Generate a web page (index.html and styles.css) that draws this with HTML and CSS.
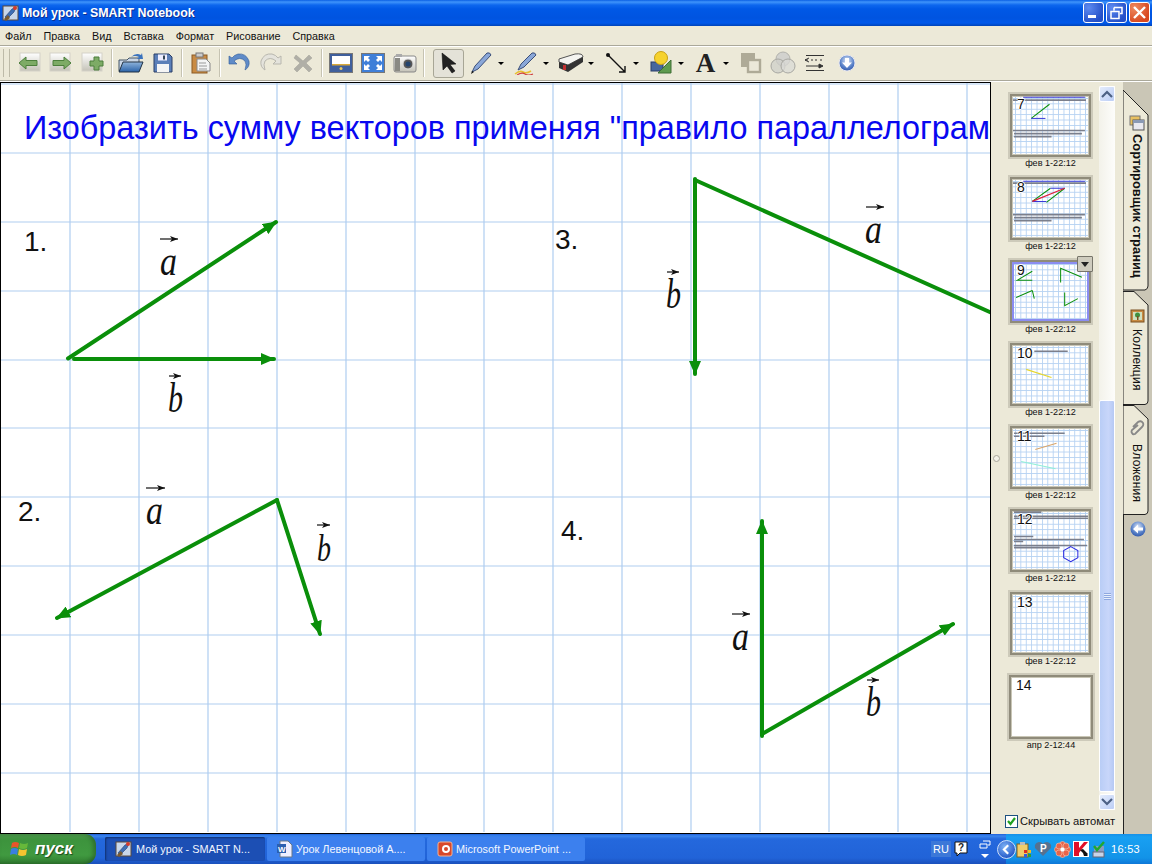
FILE: index.html
```html
<!DOCTYPE html>
<html lang="ru">
<head>
<meta charset="utf-8">
<title>Мой урок - SMART Notebook</title>
<link rel="stylesheet" href="styles.css">
</head>
<body>
<svg class="defs" width="0" height="0" aria-hidden="true">
  <defs>
    <linearGradient id="gBtn" x1="0" y1="0" x2="0" y2="1"><stop offset="0" stop-color="#fff"/><stop offset="1" stop-color="#c4c2b7"/></linearGradient>
    <linearGradient id="gBlue" x1="0" y1="0" x2="0" y2="1"><stop offset="0" stop-color="#8fb4dc"/><stop offset="1" stop-color="#2a62a8"/></linearGradient>
    <radialGradient id="gCircle" cx=".5" cy=".35" r=".7"><stop offset="0" stop-color="#dfeafa"/><stop offset=".6" stop-color="#5b83c9"/><stop offset="1" stop-color="#2b53a8"/></radialGradient>
    <marker id="head" viewBox="0 0 14 12" refX="13" refY="6" markerWidth="14" markerHeight="12" markerUnits="userSpaceOnUse" orient="auto"><path d="M0 0L14 6L0 12Z" fill="#0a8f0a"/></marker>
    <marker id="thin" viewBox="0 0 8 6" refX="8" refY="3" markerWidth="8" markerHeight="6" markerUnits="userSpaceOnUse" orient="auto"><path d="M0 0L8 3L0 6L2 3Z" fill="#111"/></marker>
    <symbol id="appicon" viewBox="0 0 18 18">
      <rect x="1" y="2" width="15" height="14" fill="#c9d7ea" stroke="#5c4a3a"/>
      <path d="M3 13L10 5L14 3L12 8L5 15Z" fill="#3f6fb5" stroke="#1c3a70" stroke-width=".6"/>
      <path d="M2 15L6 11L8 14L4 17Z" fill="#7a5a30"/>
      <circle cx="13" cy="4" r="2" fill="#d63a2a"/>
    </symbol>
  </defs>
</svg>

<header class="titlebar">
  <svg class="title-icon" width="18" height="18"><use href="#appicon"/></svg>
  <span class="title-text">Мой урок - SMART Notebook</span>
  <div class="win-btns">
    <div class="win-btn"><svg width="21" height="21" viewBox="0 0 21 21"><rect x="5" y="13" width="8" height="3" fill="#fff"/></svg></div>
    <div class="win-btn"><svg width="21" height="21" viewBox="0 0 21 21"><path d="M8 5.5h8v6h-2M5 9.5h8v7H5z M8 5.5v3" fill="none" stroke="#fff" stroke-width="1.5"/></svg></div>
    <div class="win-btn close"><svg width="21" height="21" viewBox="0 0 21 21"><path d="M5 5L16 16M16 5L5 16" stroke="#fff" stroke-width="2.4"/></svg></div>
  </div>
</header>

<nav class="menubar">
  <span>Файл</span><span>Правка</span><span>Вид</span><span>Вставка</span><span>Формат</span><span>Рисование</span><span>Справка</span>
</nav>

<div class="toolbar">
  <i class="grip"></i><i class="grip second"></i>
  <div class="btn"><svg width="24" height="22" viewBox="0 0 24 22"><rect x="3" y="1" width="20" height="18" fill="url(#gBtn)" stroke="#d4d2c8"/><path d="M2 11L9 5v3.5h11v5H9V17Z" fill="#7dab66" stroke="#4c7f3c"/></svg></div>
  <div class="btn"><svg width="24" height="22" viewBox="0 0 24 22"><rect x="1" y="1" width="20" height="18" fill="url(#gBtn)" stroke="#d4d2c8"/><path d="M22 11L15 5v3.5H4v5h11V17Z" fill="#7dab66" stroke="#4c7f3c"/></svg></div>
  <div class="btn"><svg width="24" height="22" viewBox="0 0 24 22"><rect x="1" y="1" width="20" height="18" fill="url(#gBtn)" stroke="#d4d2c8"/><path d="M13 5h5v4h4v5h-4v4h-5v-4H9V9h4Z" fill="#7dab66" stroke="#4c7f3c"/></svg></div>
  <i class="sep"></i>
  <div class="btn"><svg width="26" height="22" viewBox="0 0 26 22"><path d="M1 8h8l2-2h10v13H1Z" fill="#c9d6e6" stroke="#456"/><path d="M1 20L5 10h20l-4 10Z" fill="url(#gBlue)" stroke="#234"/><path d="M13 5Q18 0 23 3l1-2 1 6-6 0 2-2Q17 3 13 5Z" fill="#3b73bd"/></svg></div>
  <div class="btn"><svg width="20" height="20" viewBox="0 0 20 20"><path d="M1 1h15l3 3v15H1Z" fill="#5b7fb8" stroke="#2b3f66"/><rect x="5" y="1.5" width="9" height="6" fill="#eef"/><rect x="10" y="2.5" width="2" height="4" fill="#345"/><rect x="4" y="11" width="12" height="8" fill="#f5f5f5"/></svg></div>
  <i class="sep"></i>
  <div class="btn"><svg width="20" height="22" viewBox="0 0 20 22"><rect x="1" y="3" width="15" height="18" fill="#c98b44" stroke="#8a5a25"/><rect x="5" y="1" width="7" height="4" fill="#ccc" stroke="#777"/><path d="M6 7h9l4 4v8H6Z" fill="#f4f4f4" stroke="#888"/><path d="M8 11h7M8 14h8M8 17h8" stroke="#999"/></svg></div>
  <i class="sep"></i>
  <div class="btn"><svg width="22" height="20" viewBox="0 0 22 20"><path d="M1 3v8h8L6 8Q12 3 17 8q2 3 0 9q5-3 4-9Q18 0 10 1Q6 2 4 5Z" fill="#5f8bc8" stroke="#2f5a98" stroke-width=".6"/></svg></div>
  <div class="btn"><svg width="22" height="20" viewBox="0 0 22 20"><path d="M21 3v8h-8l3-3Q10 3 5 8q-2 3 0 9Q0 14 1 8Q4 0 12 1q4 1 6 4Z" fill="#e4e3dc" stroke="#b8b7ae"/></svg></div>
  <div class="btn"><svg width="20" height="20" viewBox="0 0 20 20"><path d="M3 2L10 8L16 2L19 5L13 10L19 16L16 19L10 13L4 19L1 16L7 10L1 5Z" fill="#b0afa7" stroke="#a0a097" stroke-width=".5"/></svg></div>
  <i class="sep"></i>
  <div class="btn"><svg width="24" height="20" viewBox="0 0 24 20"><rect x=".5" y=".5" width="23" height="19" fill="#3f5f9c" stroke="#777"/><rect x="3" y="3" width="18" height="8" fill="#fff"/><rect x="3" y="11" width="18" height="1.5" fill="#d8a838"/><circle cx="12" cy="15.5" r="1.5" fill="#e8c860"/></svg></div>
  <div class="btn"><svg width="24" height="20" viewBox="0 0 24 20"><rect x=".5" y=".5" width="23" height="19" fill="#3f7fd8" stroke="#777"/><path d="M3 3h6l-2 2 2 2-2 2-2-2-2 2ZM21 3v6l-2-2-2 2-2-2 2-2-2-2ZM3 17v-6l2 2 2-2 2 2-2 2 2 2ZM21 17h-6l2-2-2-2 2-2 2 2 2-2Z" fill="#fff"/></svg></div>
  <div class="btn"><svg width="24" height="20" viewBox="0 0 24 20"><rect x="1" y="3" width="22" height="16" rx="2" fill="url(#gBtn)" stroke="#888"/><rect x="3" y="1" width="6" height="3" fill="#aaa"/><rect x="2" y="5" width="5" height="13" fill="#8a8a84"/><circle cx="15" cy="11" r="5" fill="#555" stroke="#ddd"/><circle cx="15" cy="11" r="2.5" fill="#24446e"/></svg></div>
  <i class="sep"></i>
  <div class="btn selected"><svg width="18" height="22" viewBox="0 0 18 22"><path d="M2 1L16 12L10 12.5L15 19L12 21L7 14L3 18Z" fill="#222" stroke="#000" stroke-width=".5"/></svg></div>
  <div class="btn tool"><span class="ico"><svg width="24" height="24" viewBox="0 0 24 24"><path d="M3 21L6 15L18 2Q21 1 22 4L9 18Z" fill="#8aa7d8" stroke="#3b4f7a"/><path d="M2 23L3 20L5 21Z" fill="#111"/></svg></span><b class="caret"></b></div>
  <div class="btn tool"><span class="ico"><svg width="24" height="24" viewBox="0 0 24 24"><path d="M4 19L7 13L18 2Q21 1 22 4L10 16Z" fill="#8aa7d8" stroke="#3b4f7a"/><path d="M1 23q5-4 8-2t8-1" fill="none" stroke="#e8c030" stroke-width="1.6"/><path d="M3 24q5-3 8-1t8 0" fill="none" stroke="#d04040" stroke-width="1.2"/></svg></span><b class="caret"></b></div>
  <div class="btn tool"><span class="ico"><svg width="26" height="20" viewBox="0 0 26 20"><path d="M1 6L17 1Q25 0 25 4L10 12L1 9Z" fill="#f4f4f0" stroke="#555"/><path d="M1 9v6l9 4 15-10V4L10 12Z" fill="#333"/><rect x="5" y="12" width="3" height="5" fill="#c03030"/></svg></span><b class="caret"></b></div>
  <div class="btn tool"><span class="ico"><svg width="24" height="24" viewBox="0 0 24 24"><circle cx="4" cy="4" r="2" fill="#111"/><path d="M4 4L21 21M21 15V21H15" fill="none" stroke="#111" stroke-width="1.4"/></svg></span><b class="caret"></b></div>
  <div class="btn tool"><span class="ico"><svg width="22" height="24" viewBox="0 0 22 24"><rect x="1" y="11" width="12" height="9" fill="#47679e" stroke="#2b3f66"/><path d="M21 9V22H8Z" fill="#5f9b4f" stroke="#3f6f35"/><circle cx="11" cy="7" r="6.5" fill="#f6d22e" stroke="#c8a018"/></svg></span><b class="caret"></b></div>
  <div class="btn tool"><span class="ico"><span class="big-a">A</span></span><b class="caret"></b></div>
  <div class="btn"><svg width="22" height="22" viewBox="0 0 22 22"><rect x="1" y="1" width="14" height="14" fill="#aeaa97"/><rect x="8" y="8" width="12" height="12" fill="#ebe8d9" stroke="#aeaa97" stroke-width="2.4"/></svg></div>
  <div class="btn"><svg width="26" height="24" viewBox="0 0 26 24"><circle cx="13" cy="8" r="7" fill="#d2d2ce" stroke="#b2b2ac"/><circle cx="8" cy="15" r="7" fill="#cfcfca" fill-opacity=".75" stroke="#a8a8a2"/><circle cx="18" cy="15" r="7" fill="#dadad6" fill-opacity=".75" stroke="#a8a8a2"/></svg></div>
  <div class="btn"><svg width="22" height="18" viewBox="0 0 22 18"><path d="M2 1.5h18M2 16.5h18" stroke="#333" stroke-width="1"/><path d="M1 6h3M5 4L1 6l4 2M11 6h2M16 6h2M7 6h2" stroke="#333" fill="none"/><path d="M2 12h15M15 10l4 2-4 2Z" stroke="#333" fill="#333"/></svg></div>
  <div class="btn"><svg width="18" height="18" viewBox="0 0 18 18"><circle cx="9" cy="9" r="8" fill="url(#gCircle)" stroke="#e8e8f0"/><path d="M9 14L4 8.5h3V4h4v4.5h3Z" fill="#fff"/></svg></div>
</div>

<main class="workspace">
  <section class="canvas">
    <svg class="board" viewBox="1 83 989 749" width="989" height="749">
      <path class="grid" d="M70 83V832M139 83V832M208 83V832M277 83V832M346 83V832M415 83V832M484 83V832M553 83V832M622 83V832M691 83V832M760 83V832M829 83V832M898 83V832M967 83V832M1 84H990M1 153H990M1 222H990M1 291H990M1 360H990M1 428H990M1 497H990M1 566H990M1 635H990M1 704H990M1 773H990"/>
      <text class="heading" x="24" y="139">Изобразить сумму векторов применяя "правило параллелограм</text>
      <text class="num" x="24" y="251">1.</text>
      <text class="num" x="18" y="521">2.</text>
      <text class="num" x="555" y="249">3.</text>
      <text class="num" x="561" y="540">4.</text>

      <line class="vec" x1="68" y1="358.5" x2="276" y2="222"/>
      <line class="vec" x1="74" y1="359" x2="274" y2="359"/>
      <line class="vec" x1="277" y1="500" x2="57" y2="618"/>
      <line class="vec" x1="277" y1="500" x2="320" y2="634"/>
      <line class="vec plain" x1="695" y1="180" x2="992" y2="313"/>
      <line class="vec" x1="695" y1="179" x2="695" y2="374"/>
      <line class="vec" x1="762" y1="736" x2="762" y2="521"/>
      <line class="vec" x1="762" y1="734" x2="953" y2="624"/>

      <text class="letter" x="160" y="275" textLength="17" lengthAdjust="spacingAndGlyphs">a</text><line class="over" x1="160" y1="239" x2="178" y2="239"/>
      <text class="letter" x="168" y="412" textLength="15" lengthAdjust="spacingAndGlyphs">b</text><line class="over" x1="169" y1="376" x2="181" y2="376"/>
      <text class="letter" x="146" y="524" textLength="17" lengthAdjust="spacingAndGlyphs">a</text><line class="over" x1="146" y1="488" x2="165" y2="488"/>
      <text class="letter small" x="317" y="561" textLength="14" lengthAdjust="spacingAndGlyphs">b</text><line class="over" x1="317" y1="525" x2="330" y2="525"/>
      <text class="letter" x="865" y="243" textLength="17" lengthAdjust="spacingAndGlyphs">a</text><line class="over" x1="866" y1="207" x2="884" y2="207"/>
      <text class="letter" x="666" y="308" textLength="15" lengthAdjust="spacingAndGlyphs">b</text><line class="over" x1="667" y1="272" x2="679" y2="272"/>
      <text class="letter" x="732" y="650" textLength="17" lengthAdjust="spacingAndGlyphs">a</text><line class="over" x1="732" y1="614" x2="750" y2="614"/>
      <text class="letter" x="866" y="716" textLength="15" lengthAdjust="spacingAndGlyphs">b</text><line class="over" x1="867" y1="680" x2="879" y2="680"/>
    </svg>
  </section>

  <aside class="panel">
    <i class="resize-dot"></i>
    <div class="panel-body">
      <div class="thumbs">
        <figure class="page">
          <div class="sheet grid-bg">
            <span class="pg">7</span>
            <svg viewBox="0 0 78 60"><path class="t-blue" d="M12 2H73"/><path class="t-gray" d="M2 5H74M2 35H73M3 38H70M3 41H40"/><path class="t-green" d="M20 23L38 9"/><path class="t-blue" d="M20 23H34"/></svg>
          </div>
          <figcaption>фев 1-22:12</figcaption>
        </figure>
        <figure class="page">
          <div class="sheet grid-bg">
            <span class="pg">8</span>
            <svg viewBox="0 0 78 60"><path class="t-blue" d="M12 3H73"/><path class="t-gray" d="M2 5H74M2 36H73M3 39H70M3 42H40"/><path class="t-green" d="M21 23L39 10M35 24L53 10"/><path class="t-blue" d="M21 23H35M39 10H53"/><path class="t-red" d="M21 23L53 10"/></svg>
          </div>
          <figcaption>фев 1-22:12</figcaption>
        </figure>
        <figure class="page current">
          <div class="sheet grid-bg">
            <span class="pg">9</span>
            <svg viewBox="0 0 78 60"><path class="t-green" d="M21 10L6 19H21M49 21V7L70 16M21 29L5 36M21 29L23 37M53 31V44L66 37"/></svg>
          </div>
          <figcaption>фев 1-22:12</figcaption>
          <button class="page-menu" type="button"><b></b></button>
        </figure>
        <figure class="page">
          <div class="sheet grid-bg">
            <span class="pg">10</span>
            <svg viewBox="0 0 78 60"><path class="t-gray" d="M23 7H56"/><path class="t-yellow" d="M15 25L40 33"/></svg>
          </div>
          <figcaption>фев 1-22:12</figcaption>
        </figure>
        <figure class="page">
          <div class="sheet grid-bg">
            <span class="pg">11</span>
            <svg viewBox="0 0 78 60"><path class="t-gray" d="M3 6H53M3 9H33"/><path class="t-orange" d="M24 22L45 16"/><path class="t-cyan" d="M10 34L44 41"/></svg>
          </div>
          <figcaption>фев 1-22:12</figcaption>
        </figure>
        <figure class="page">
          <div class="sheet grid-bg">
            <span class="pg">12</span>
            <svg viewBox="0 0 78 60"><path class="t-gray" d="M3 2H30M3 6H76M3 8H76M3 26H22M3 29H72M3 31H12M3 35H75M3 37H48"/><path class="t-hex" d="M59 36L66 40V47L59 51L52 47V40Z"/></svg>
          </div>
          <figcaption>фев 1-22:12</figcaption>
        </figure>
        <figure class="page">
          <div class="sheet grid-bg"><span class="pg">13</span></div>
          <figcaption>фев 1-22:12</figcaption>
        </figure>
        <figure class="page blank">
          <div class="sheet"><span class="pg">14</span></div>
          <figcaption>апр 2-12:44</figcaption>
        </figure>
      </div>
      <div class="scrollbar">
        <div class="sb-btn"><svg width="12" height="8" viewBox="0 0 12 8"><path d="M1 7L6 2L11 7" fill="none" stroke="#4d6185" stroke-width="2.2"/></svg></div>
        <div class="sb-track">
          <div class="sb-thumb"><i class="sb-grip"></i></div>
        </div>
        <div class="sb-btn"><svg width="12" height="8" viewBox="0 0 12 8"><path d="M1 1L6 6L11 1" fill="none" stroke="#4d6185" stroke-width="2.2"/></svg></div>
      </div>
    </div>
    <label class="autohide"><span class="check"><svg width="11" height="11" viewBox="0 0 11 11"><path d="M2 5L4.5 8L9 2" fill="none" stroke="#21a121" stroke-width="2.2"/></svg></span>Скрывать автомат</label>
  </aside>

  <div class="tabs">
    <div class="tab active h-active">
      <svg class="tab-shape" viewBox="0 0 29 209" preserveAspectRatio="none"><path d="M0 8L25 33V204Q25 207 22 208H0Z" fill="#ece9d8" stroke="#222" stroke-width="1"/></svg>
      <svg class="tab-ico" width="16" height="16" viewBox="0 0 16 16"><rect x="1" y="1" width="10" height="9" fill="#e8c060" stroke="#777"/><rect x="4" y="5" width="11" height="10" fill="#e8e8f0" stroke="#555"/><rect x="4" y="5" width="11" height="3" fill="#8a99b5"/></svg>
      <span class="tab-label strong">Сортировщик страниц</span>
    </div>
    <div class="tab h-gallery">
      <svg class="tab-shape" viewBox="0 0 29 114" preserveAspectRatio="none"><path d="M0 .5H11L25 14V110Q25 113 22 113.5H0Z" fill="#ece9d8" stroke="#222" stroke-width="1"/></svg>
      <svg class="tab-ico" width="15" height="15" viewBox="0 0 15 15"><rect x="1" y="2" width="13" height="12" fill="#c98b44" stroke="#7a5020"/><rect x="3" y="4" width="9" height="8" fill="#cfe0c0"/><circle cx="7.500" cy="7" r="2.500" fill="#3f8f3f"/><rect x="7" y="8" width="1.500" height="4" fill="#7a5020"/></svg>
      <span class="tab-label">Коллекция</span>
    </div>
    <div class="tab h-attach">
      <svg class="tab-shape" viewBox="0 0 29 110" preserveAspectRatio="none"><path d="M0 .5H11L25 14V106Q25 109 22 109.5H0Z" fill="#ece9d8" stroke="#222" stroke-width="1"/></svg>
      <svg class="tab-ico" width="16" height="16" viewBox="0 0 16 16"><path d="M4 7L9 2Q12 0 14 3Q15 5 13 7L6 14Q4 15 3 13Q2 12 3 10L9 5" fill="none" stroke="#888" stroke-width="1.800"/></svg>
      <span class="tab-label">Вложения</span>
    </div>
    <div class="tab-back"><svg width="16" height="16" viewBox="0 0 16 16"><circle cx="8" cy="8" r="7.500" fill="url(#gCircle)"/><path d="M13 6.500H8V3.500L3 8L8 12.500V9.500H13Z" fill="#fff"/></svg></div>
  </div>
</main>

<footer class="taskbar">
  <div class="start">
    <svg width="20" height="18" viewBox="0 0 20 18"><path d="M2 3Q5 1 9 3L8 8Q5 6 1 8Z" fill="#e8542a"/><path d="M10 3Q14 5 18 3L17 8Q13 10 9 8Z" fill="#66b83a"/><path d="M1 9Q4 7 8 9L7 15Q4 13 0 15Z" fill="#3a7fe0"/><path d="M9 9Q13 11 17 9L16 15Q12 17 8 15Z" fill="#f4c430"/></svg>
    <span>пуск</span>
  </div>
  <div class="task-list">
    <div class="task on"><svg width="18" height="18"><use href="#appicon"/></svg><span>Мой урок - SMART N...</span></div>
    <div class="task"><svg width="16" height="18" viewBox="0 0 16 18"><path d="M3 1h8l4 4v12H3Z" fill="#eef" stroke="#678"/><rect x="0" y="4" width="9" height="9" fill="#2b5fb0"/><text class="w" x="1" y="12">W</text></svg><span>Урок Левенцовой А....</span></div>
    <div class="task"><svg width="16" height="18" viewBox="0 0 16 18"><rect x="1" y="2" width="14" height="14" rx="2" fill="#d8482a" stroke="#f5b090"/><circle cx="9" cy="9" r="4" fill="#fff"/><circle cx="9" cy="9" r="2" fill="#d8482a"/></svg><span>Microsoft PowerPoint ...</span></div>
  </div>
  <div class="lang">RU</div>
  <svg class="help" width="14" height="16" viewBox="0 0 14 16"><path d="M1 1h12v11H6l-3 3v-3H1Z" fill="#fff" stroke="#111"/><text class="q" x="4" y="10">?</text></svg>
  <div class="bands"><svg width="12" height="9" viewBox="0 0 12 9"><path d="M4 1h7v4H9M1 4h7v4H1z" fill="none" stroke="#fff"/></svg><svg width="8" height="4" viewBox="0 0 8 4"><path d="M0 0H8L4 4Z" fill="#fff"/></svg></div>
  <div class="tray">
    <span class="tray-back"><svg width="20" height="20" viewBox="0 0 20 20"><path d="M12 5L7 10L12 15" fill="none" stroke="#fff" stroke-width="2.600"/></svg></span>
    <svg width="16" height="17" viewBox="0 0 16 17"><rect x="1" y="3" width="11" height="13" fill="#f0cd6a" stroke="#806020"/><rect x="4" y="1" width="5" height="3" fill="#bbb"/><rect x="8" y="9" width="3" height="3" fill="#e03020"/><rect x="12" y="9" width="3" height="3" fill="#f0c020"/><rect x="8" y="13" width="3" height="3" fill="#3060e0"/><rect x="12" y="13" width="3" height="3" fill="#30a030"/></svg>
    <svg width="18" height="16" viewBox="0 0 18 16"><path d="M9 15L1 7Q0 2 5 1Q8 1 9 3Q10 1 13 1Q18 2 17 7Z" fill="#56718f"/><text class="p" x="6" y="11">P</text></svg>
    <svg width="17" height="17" viewBox="0 0 17 17"><g fill="#e8644a" stroke="#f8c8b0" stroke-width=".6"><circle cx="8.500" cy="3.500" r="3"/><circle cx="8.500" cy="13.500" r="3"/><circle cx="3.500" cy="8.500" r="3"/><circle cx="13.500" cy="8.500" r="3"/><circle cx="5" cy="5" r="3"/><circle cx="12" cy="5" r="3"/><circle cx="5" cy="12" r="3"/><circle cx="12" cy="12" r="3"/></g><circle cx="8.500" cy="8.500" r="2" fill="#fff"/></svg>
    <svg width="16" height="16" viewBox="0 0 16 16"><rect width="16" height="16" fill="#fff"/><path d="M1 1h5v6l5-6h4L9 8l-3 4v3H1Z" fill="#e0102a"/><path d="M7 9l3-1 5 5-1 1 1 1h-4l-1-3Z" fill="#111"/></svg>
    <svg width="16" height="17" viewBox="0 0 16 17"><rect x="3" y="5" width="10" height="6" fill="#8a9ac0"/><rect x="2" y="11" width="11" height="5" fill="#c8d4e8" stroke="#667"/><path d="M3 5L6 9L13 1" fill="none" stroke="#20a830" stroke-width="2.400"/></svg>
    <span class="clock">16:53</span>
  </div>
</footer>
</body>
</html>
```

FILE: styles.css
```css
* { box-sizing: border-box; }
html, body { margin: 0; padding: 0; }
body {
  width: 1152px; height: 864px; overflow: hidden;
  display: flex; flex-direction: column;
  background: #ece9d8; color: #000;
  font-family: "Liberation Sans", Arial, sans-serif;
}
.defs { position: absolute; }
svg { display: block; flex: none; }

.titlebar {
  height: 26px; flex: none; display: flex; align-items: center;
  padding-left: 2px; color: #fff;
  background: linear-gradient(#0a5fe4 0, #3f94fb 2px, #0d67ee 5px, #0058e6 9px, #0054e0 18px, #0058ea 23px, #0044b8 26px);
}
.title-icon { margin-right: 2px; }
.title-text { font-size: 12.4px; font-weight: bold; text-shadow: 1px 1px 0 #0f2f90; }
.win-btns { margin-left: auto; display: flex; gap: 2px; padding-right: 2px; margin-top: -2px; }
.win-btn {
  width: 21px; height: 21px; border: 1px solid #fff; border-radius: 3px;
  background: radial-gradient(circle at 25% 25%, #5d8af0, #2450c8 75%);
  display: flex; align-items: center; justify-content: center;
}
.win-btn.close { background: radial-gradient(circle at 25% 25%, #ee8a60, #d84820 75%); }

.menubar {
  height: 19px; flex: none; display: flex; align-items: center; gap: 12px;
  padding-left: 5px; font-size: 10.8px; background: #ece9d8; color: #111;
}

.toolbar {
  height: 36px; flex: none; display: flex; align-items: center;
  padding-left: 3px; margin-bottom: 1px;
  background: #ece9d8; border-top: 1px solid #aaa89a; border-bottom: 1px solid #aaa89a;
  box-shadow: inset 0 1px 0 #fff, 0 1px 0 #fff;
}
.grip { width: 1px; height: 28px; background: #bdbaa8; margin-right: 5px; }
.grip.second { margin-right: 3px; }
.btn { width: 32px; height: 32px; flex: none; display: flex; align-items: center; justify-content: center; }
.sep { width: 2px; height: 28px; flex: none; margin: 0 2px; background: #c6c3b2; border-right: 1px solid #fff; }
.btn.selected {
  width: 31px; height: 29px; margin-left: 6px; margin-right: 1px;
  background: #e4e2d8; border: 1px solid #a8a696; border-radius: 3px;
}
.btn.tool { width: 45px; justify-content: flex-start; }
.ico { width: 31px; display: flex; justify-content: center; align-items: center; flex: none; }
.caret { width: 0; height: 0; margin-left: 2px; border: 3px solid transparent; border-top: 3px solid #000; border-bottom: 0; }
.big-a { font: bold 27px/28px "Liberation Serif", serif; color: #222; }

.workspace { flex: 1; min-height: 0; display: flex; }

.canvas {
  width: 991px; flex: none; background: #fff; overflow: hidden;
  border: 1px solid #000;
}
.board { overflow: hidden; }
.grid { stroke: #afcdf0; stroke-width: 1.2; fill: none; }
.heading { font-family: "Liberation Sans", sans-serif; font-size: 32.4px; fill: #0808f0; }
.num { font-family: "Liberation Sans", sans-serif; font-size: 28px; fill: #111; }
.vec { stroke: #0a8f0a; stroke-width: 4; stroke-linecap: round; marker-end: url(#head); }
.vec.plain { marker-end: none; }
.letter { font-family: "Liberation Serif", serif; font-style: italic; font-size: 42px; fill: #111; }
.letter.small { font-size: 38px; }
.over { stroke: #111; stroke-width: 1.2; marker-end: url(#thin); }

.panel { width: 132px; flex: none; position: relative; display: flex; flex-direction: column; background: #ece9d8; }
.resize-dot {
  position: absolute; left: 2px; top: 373px; width: 7px; height: 7px;
  border: 1.5px solid #a8a69a; border-radius: 50%; background: #f4f2e8;
}
.panel-body { flex: 1; min-height: 0; display: flex; padding-top: 4px; }
.thumbs { width: 108px; flex: none; display: flex; flex-direction: column; padding: 6px 0 0 17px; overflow: hidden; }
.page { margin: 0; height: 83px; flex: none; position: relative; }
.sheet {
  width: 85px; height: 67px; position: relative; background: #fff;
  border: 4px solid #8f8b7a; outline: 2px solid #cdcaba; outline-offset: -2px;
  box-shadow: inset 0 0 0 1px #c9c6b6;
}
.grid-bg {
  background-color: #fff;
  background-image:
    linear-gradient(#b6d2f2 1px, transparent 1px),
    linear-gradient(90deg, #b6d2f2 1px, transparent 1px);
  background-size: 5.4px 5.4px;
  background-position: 3px 2px;
}
.sheet svg { position: absolute; left: -1px; top: -1px; width: 79px; height: 61px; }
.pg {
  position: absolute; left: 5px; top: 1px; z-index: 1;
  font-size: 14px; line-height: 15px; color: #111;
  text-shadow: 1px 0 0 #fff, -1px 0 0 #fff, 0 1px 0 #fff, 0 -1px 0 #fff;
}
figcaption { font-size: 9.1px; line-height: 11px; text-align: center; width: 85px; color: #111; margin-top: -1px; }
.current .sheet::after { content: ""; position: absolute; inset: 0; border: 2px solid #8b8df2; }
.page-menu {
  position: absolute; left: 69px; top: -2px; width: 16px; height: 16px; padding: 0;
  display: flex; align-items: center; justify-content: center;
  background: #cfccbe; border: 1px solid #77756a; border-radius: 1px; z-index: 2;
}
.page-menu b { width: 0; height: 0; border: 4px solid transparent; border-top: 5px solid #222; border-bottom: 0; }
.blank { margin-left: -1px; }
.blank .sheet { width: 88px; height: 68px; }
.blank figcaption { width: 88px; }
.t-blue, .t-gray, .t-green, .t-red, .t-yellow, .t-orange, .t-cyan, .t-hex { fill: none; }
.t-blue { stroke: #3a3ad8; stroke-width: 1; }
.t-gray { stroke: #7b7f8c; stroke-width: 1.6; }
.t-green { stroke: #0a8f0a; stroke-width: 1; }
.t-red { stroke: #e0203c; stroke-width: 1.2; }
.t-yellow { stroke: #e6d62c; stroke-width: 1.2; }
.t-orange { stroke: #d9a56a; stroke-width: 1; }
.t-cyan { stroke: #8ff0d8; stroke-width: 1; }
.t-hex { stroke: #2a2ae0; stroke-width: 1; }

.scrollbar { width: 16px; flex: none; display: flex; flex-direction: column; background: linear-gradient(90deg, #f3f2ea, #fdfdfb); }
.sb-btn {
  height: 16px; flex: none; display: flex; align-items: center; justify-content: center;
  background: linear-gradient(135deg, #e4ecfc, #bccef6); border: 1px solid #fff; border-radius: 2px;
}
.sb-track { flex: 1; min-height: 0; display: flex; flex-direction: column; justify-content: flex-end; }
.sb-thumb {
  height: 392px; display: flex; align-items: center; justify-content: center;
  background: linear-gradient(90deg, #b9cdf6, #c8d6fa 60%, #b6c9f4); border: 1px solid #fff; border-radius: 2px;
  margin-bottom: 2px;
}
.sb-grip { width: 7px; height: 7px; background: repeating-linear-gradient(#8fa8e0 0 1px, #e6eefc 1px 2px); }
.autohide {
  height: 24px; flex: none; display: flex; align-items: center; gap: 2px;
  padding-left: 14px; padding-bottom: 2px; font-size: 11.2px; color: #111; white-space: nowrap;
}
.check {
  width: 13px; height: 13px; display: flex; align-items: center; justify-content: center;
  background: #fff; border: 1px solid #1c5180;
}

.tabs { flex: 1; min-width: 0; display: flex; flex-direction: column; background: #cac6b6; border-left: 1px solid transparent; }
.tab { position: relative; flex: none; display: flex; flex-direction: column; align-items: center; padding-left: 1px; padding-right: 2px; margin-left: -1px; }
.h-active { height: 209px; padding-top: 33px; }
.h-gallery { height: 114px; padding-top: 17px; }
.h-attach { height: 110px; padding-top: 15px; }
.tab-shape { position: absolute; left: 0; top: 0; width: 100%; height: 100%; }
.tab-ico, .tab-label { position: relative; }
.tab-label { writing-mode: vertical-rl; font-size: 12px; margin-top: 6px; color: #111; white-space: nowrap; letter-spacing: .25px; }
.tab-label.strong { font-weight: bold; font-size: 12.9px; letter-spacing: 0; margin-top: 3px; }
.h-attach .tab-label { margin-top: 8px; }
.tab-back { flex: 1; display: flex; justify-content: center; padding: 6px 2px 0 1px; border-left: 1px solid #222; margin-left: -1px; }

.taskbar {
  height: 30px; flex: none; display: flex; align-items: center; color: #fff;
  background: linear-gradient(#1f5fd8 0, #3a86ee 2px, #2468dd 5px, #2163d8 24px, #1a50bc 30px);
}
.start {
  width: 96px; height: 30px; flex: none; display: flex; align-items: center; gap: 5px; padding-left: 10px;
  background: linear-gradient(#4d9a4d, #3d933d 20%, #409a40 70%, #2f7a2f);
  border-radius: 0 11px 11px 0;
  box-shadow: inset -3px 0 4px rgba(0,0,0,.25);
}
.start span { font-size: 17px; font-weight: bold; font-style: italic; text-shadow: 1px 1px 1px #1c4a1c; }
.task-list { display: flex; gap: 2px; padding-left: 9px; width: 837px; flex: none; }
.task {
  width: 158px; height: 24px; display: flex; align-items: center; gap: 3px; padding-left: 10px;
  font-size: 10.9px; background: #3c80ee; border-radius: 2px; white-space: nowrap; color: #f2f6ff;
}
.task.on { background: #1c4fb4; box-shadow: inset 1px 1px 2px #103070; width: 160px; }
.w { font-size: 8px; font-weight: bold; fill: #fff; }
.lang { font-size: 11px; width: 20px; height: 16px; background: #3c78d8; text-align: center; line-height: 16px; margin-left: -2px; }
.help { margin-left: 3px; }
.q { font-size: 10px; font-weight: bold; fill: #222; }
.bands { width: 34px; display: flex; flex-direction: column; align-items: center; gap: 5px; }
.tray {
  flex: 1; height: 30px; display: flex; align-items: center; gap: 2px; margin-left: 4px;
  background: linear-gradient(#1690e8 0, #18a0f2 3px, #1293e8 24px, #0e78d8 30px);
}
.tray-back {
  width: 19px; height: 19px; margin-left: -9px; margin-right: -2px; border-radius: 50%; flex: none;
  background: radial-gradient(circle at 40% 35%, #7fb4f6, #2459c8 75%); border: 1px solid #cfe0fa;
  display: flex; align-items: center; justify-content: center;
}
.tray-back svg { width: 17px; height: 17px; }
.p { font-size: 10px; font-weight: bold; fill: #fff; }
.clock { font-size: 11px; margin-left: 2px; letter-spacing: .3px; }
```
